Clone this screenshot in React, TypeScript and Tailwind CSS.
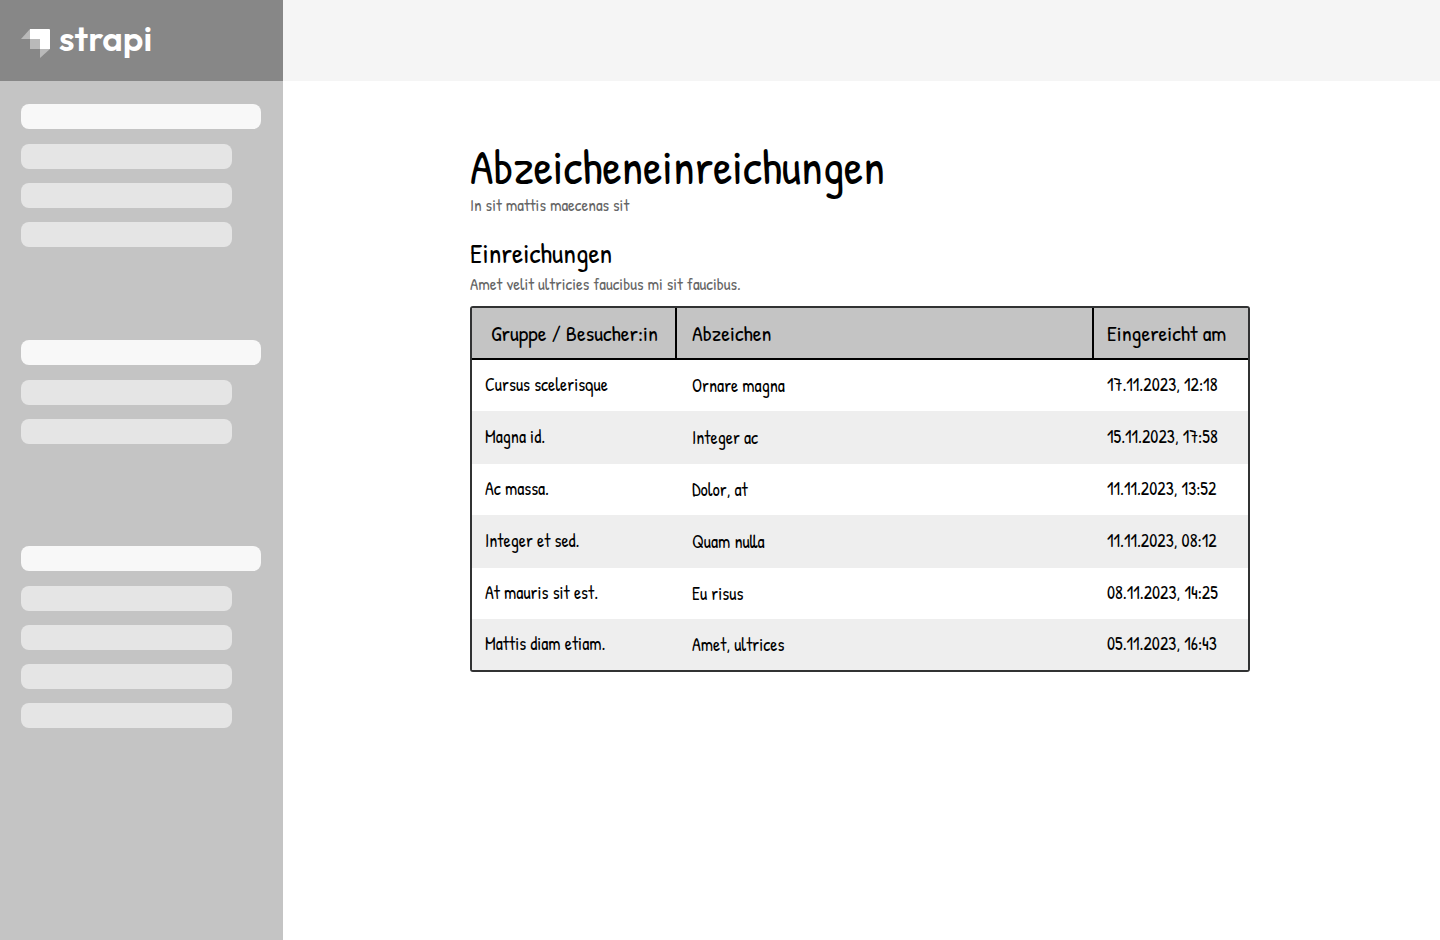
const menuGroups = [
  { id: 'content', items: 3 },
  { id: 'plugins', items: 2 },
  { id: 'general', items: 4 },
];

const submissions = [
  { group: 'Cursus scelerisque', badge: 'Ornare magna', date: '17.11.2023, 12:18' },
  { group: 'Magna id.', badge: 'Integer ac', date: '15.11.2023, 17:58' },
  { group: 'Ac massa.', badge: 'Dolor, at', date: '11.11.2023, 13:52' },
  { group: 'Integer et sed.', badge: 'Quam nulla', date: '11.11.2023, 08:12' },
  { group: 'At mauris sit est.', badge: 'Eu risus', date: '08.11.2023, 14:25' },
  { group: 'Mattis diam etiam.', badge: 'Amet, ultrices', date: '05.11.2023, 16:43' },
];

function Logo() {
  return (
    <div className="flex h-[81px] items-center gap-2 bg-[#878787] pl-[21px]">
      <svg width="30" height="30" viewBox="0 0 30 30" className="mt-[6px]" aria-hidden="true">
        <path d="M0 10 9 0v10z" fill="#b9b9b9" />
        <path d="M19 20h10l-10 9z" fill="#b9b9b9" />
        <path d="M9 10h10v10H9z" fill="#b9b9b9" />
        <path d="M9 0h19a1 1 0 0 1 1 1v19H19V10H9z" fill="#fff" />
      </svg>
      <span className="pb-[6px] font-['Outfit','Inter',sans-serif] text-[35px] leading-10 font-semibold text-white">
        strapi
      </span>
    </div>
  );
}

function Sidebar() {
  return (
    <aside className="w-[283px] shrink-0 bg-[#c4c4c4]">
      <Logo />
      <nav className="flex flex-col pt-[23px] pr-[22px] pl-[21px]">
        {menuGroups.map((group) => (
          <div key={group.id} className="mb-[93px] last:mb-0 nth-2:mb-[102px]">
            <div className="mb-[15px] h-[25px] rounded-lg bg-[#f8f8f8]" />
            <ul className="flex flex-col gap-[14px] pr-[29px]">
              {Array.from({ length: group.items }, (_, i) => (
                <li key={i} className="h-[25px] rounded-lg bg-[#e5e5e5]" />
              ))}
            </ul>
          </div>
        ))}
      </nav>
    </aside>
  );
}

function SubmissionsTable() {
  return (
    <table
      aria-labelledby="submissions"
      className="mt-[12px] w-full table-fixed border-separate border-spacing-0 rounded-[3px] border-2 border-[#313233] text-left"
    >
      <colgroup>
        <col className="w-[205px]" />
        <col />
        <col className="w-[154px]" />
      </colgroup>
      <thead>
        <tr className="h-[52px] bg-[#c4c4c4] text-[22px] leading-8 whitespace-nowrap">
          <th className="border-r-2 border-b-2 border-black pl-[2px] text-center font-normal">Gruppe / Besucher:in</th>
          <th className="border-r-2 border-b-2 border-black pl-[15px] font-normal">Abzeichen</th>
          <th className="border-b-2 border-black pl-[13px] font-normal">Eingereicht am</th>
        </tr>
      </thead>
      <tbody>
        {submissions.map((row) => (
          <tr
            key={row.date}
            className="h-[51px] text-lg whitespace-nowrap even:bg-[#eeeeee] even:not-last:h-[53px]"
          >
            <td className="pb-[2px] pl-[13px]">{row.group}</td>
            <td className="pl-[15px]">{row.badge}</td>
            <td className="pb-[2px] pl-[13px]">{row.date}</td>
          </tr>
        ))}
      </tbody>
    </table>
  );
}

export default function App() {
  return (
    <div className="flex min-h-screen bg-white font-['Patrick_Hand','Lato',sans-serif] text-black">
      <Sidebar />
      <div className="min-w-0 flex-1">
        <header className="h-[81px] bg-[#f5f5f5]" />
        <main className="pt-[57px] pr-[190px] pl-[187px]">
          <h1 className="text-5xl leading-[57px]">Abzeicheneinreichungen</h1>
          <p className="text-[17px] leading-5 text-[#666666]">In sit mattis maecenas sit</p>
          <h2 id="submissions" className="mt-[18px] text-[28px] leading-10">Einreichungen</h2>
          <p className="mt-px text-[17px] leading-5 text-[#666666]">Amet velit ultricies faucibus mi sit faucibus.</p>
          <SubmissionsTable />
        </main>
      </div>
    </div>
  );
}
